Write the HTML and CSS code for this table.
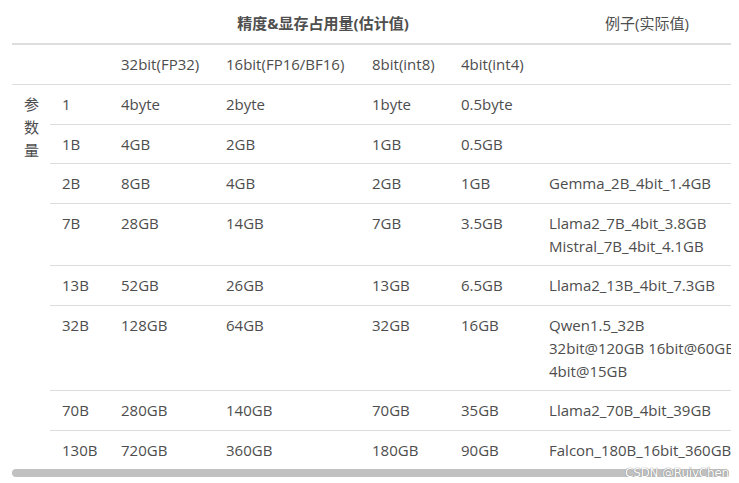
FILE: index.html
```html
<!DOCTYPE html>
<html lang="zh">
<head>
<meta charset="utf-8">
<link rel="stylesheet" href="styles.css">
</head>
<body>
<div class="wrap">
  <div class="scroll">
    <table class="tbl">
      <colgroup>
        <col class="c0"><col class="c1"><col class="c2"><col class="c3"><col class="c4"><col class="c5"><col class="c6">
      </colgroup>
      <thead>
        <tr class="head1">
          <th colspan="2"></th>
          <th colspan="4" class="center"><strong>精度&amp;显存占用量(估计值)</strong></th>
          <th class="center normal">例子(实际值)</th>
        </tr>
      </thead>
      <tbody>
        <tr class="head2">
          <td></td><td></td><td>32bit(FP32)</td><td>16bit(FP16/BF16)</td><td>8bit(int8)</td><td>4bit(int4)</td><td></td>
        </tr>
        <tr>
          <td rowspan="9" class="param">参数量</td><td>1</td><td>4byte</td><td>2byte</td><td>1byte</td><td>0.5byte</td><td></td>
        </tr>
        <tr><td>1B</td><td>4GB</td><td>2GB</td><td>1GB</td><td>0.5GB</td><td></td></tr>
        <tr><td>2B</td><td>8GB</td><td>4GB</td><td>2GB</td><td>1GB</td><td>Gemma_2B_4bit_1.4GB</td></tr>
        <tr><td>7B</td><td>28GB</td><td>14GB</td><td>7GB</td><td>3.5GB</td><td>Llama2_7B_4bit_3.8GB<br>Mistral_7B_4bit_4.1GB</td></tr>
        <tr><td>13B</td><td>52GB</td><td>26GB</td><td>13GB</td><td>6.5GB</td><td>Llama2_13B_4bit_7.3GB</td></tr>
        <tr><td>32B</td><td>128GB</td><td>64GB</td><td>32GB</td><td>16GB</td><td>Qwen1.5_32B<br>32bit@120GB 16bit@60GB<br>4bit@15GB</td></tr>
        <tr><td>70B</td><td>280GB</td><td>140GB</td><td>70GB</td><td>35GB</td><td>Llama2_70B_4bit_39GB</td></tr>
        <tr class="last"><td>130B</td><td>720GB</td><td>360GB</td><td>180GB</td><td>90GB</td><td>Falcon_180B_16bit_360GB</td></tr>
      </tbody>
    </table>
  </div>
  <div class="hbar"><div class="thumb"></div></div>
  <span class="watermark">CSDN @RuiyChen</span>
</div>
</body>
</html>
```

FILE: styles.css
```css
html, body {
  margin: 0;
  padding: 0;
  background: #ffffff;
}

body {
  font-family: "Open Sans", "Noto Sans CJK SC", sans-serif;
  font-size: 15px;
  color: #4d4d4d;
}

.wrap {
  position: relative;
  margin: 4px 8px 0 12px;
  width: 719px;
}

.scroll {
  overflow: hidden;
}

.tbl {
  border-collapse: collapse;
  table-layout: fixed;
  width: 745px;
}

.c0 { width: 38px; }
.c1 { width: 59px; }
.c2 { width: 105px; }
.c3 { width: 146px; }
.c4 { width: 89px; }
.c5 { width: 88px; }
.c6 { width: 220px; }

.tbl th,
.tbl td {
  padding: 8px 12px 7.5px;
  line-height: 23px;
  text-align: left;
  vertical-align: top;
  white-space: nowrap;
  border-bottom: 1px solid #dddddd;
  font-weight: normal;
}

.tbl .head1 th {
  padding: 8px 12px 8px;
  border-bottom: 2px solid #dddddd;
  color: #4d4d4d;
}

.tbl .head2 td {
  padding: 8px 12px 8px;
}

.tbl th.center {
  text-align: center;
}

.tbl strong {
  font-weight: 700;
  color: #4f4f4f;
}

.tbl td.param {
  white-space: normal;
  text-align: center;
  border-bottom: none;
  word-break: break-all;
}

.tbl tr.last td {
  border-bottom: none;
}

.hbar {
  height: 8px;
  display: flex;
}

.thumb {
  flex: 1;
  margin-right: 2px;
  background: #c1c1c1;
  border-radius: 4px;
}

.watermark {
  position: absolute;
  right: 2px;
  bottom: -2px;
  font-family: "DejaVu Sans", sans-serif;
  font-size: 12px;
  letter-spacing: -0.2px;
  color: #ffffff;
  text-shadow: 0 0 1px #8a8a8a, 0 0 1px #8a8a8a;
  line-height: 12px;
}
```
